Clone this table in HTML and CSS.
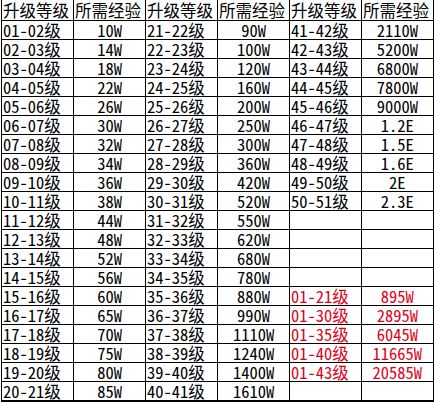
FILE: index.html
```html
<!DOCTYPE html>
<html lang="zh-CN">
<head>
<meta charset="utf-8">
<title>升级经验表</title>
<link rel="stylesheet" href="styles.css">
</head>
<body>
<table class="exp-table">
  <colgroup>
    <col class="c"><col class="c"><col class="c"><col class="c"><col class="c"><col class="c">
  </colgroup>
  <thead>
    <tr>
      <th class="lv">升级等级</th><th class="lv">所需经验</th>
      <th class="lv">升级等级</th><th class="lv">所需经验</th>
      <th class="lv">升级等级</th><th class="lv">所需经验</th>
    </tr>
  </thead>
  <tbody>
    <tr><td class="lv">01-02级</td><td class="xp">10W</td><td class="lv">21-22级</td><td class="xp">90W</td><td class="lv">41-42级</td><td class="xp">2110W</td></tr>
    <tr><td class="lv">02-03级</td><td class="xp">14W</td><td class="lv">22-23级</td><td class="xp">100W</td><td class="lv">42-43级</td><td class="xp">5200W</td></tr>
    <tr><td class="lv">03-04级</td><td class="xp">18W</td><td class="lv">23-24级</td><td class="xp">120W</td><td class="lv">43-44级</td><td class="xp">6800W</td></tr>
    <tr><td class="lv">04-05级</td><td class="xp">22W</td><td class="lv">24-25级</td><td class="xp">160W</td><td class="lv">44-45级</td><td class="xp">7800W</td></tr>
    <tr><td class="lv">05-06级</td><td class="xp">26W</td><td class="lv">25-26级</td><td class="xp">200W</td><td class="lv">45-46级</td><td class="xp">9000W</td></tr>
    <tr><td class="lv">06-07级</td><td class="xp">30W</td><td class="lv">26-27级</td><td class="xp">250W</td><td class="lv">46-47级</td><td class="xp">1.2E</td></tr>
    <tr><td class="lv">07-08级</td><td class="xp">32W</td><td class="lv">27-28级</td><td class="xp">300W</td><td class="lv">47-48级</td><td class="xp">1.5E</td></tr>
    <tr><td class="lv">08-09级</td><td class="xp">34W</td><td class="lv">28-29级</td><td class="xp">360W</td><td class="lv">48-49级</td><td class="xp">1.6E</td></tr>
    <tr><td class="lv">09-10级</td><td class="xp">36W</td><td class="lv">29-30级</td><td class="xp">420W</td><td class="lv">49-50级</td><td class="xp">2E</td></tr>
    <tr><td class="lv">10-11级</td><td class="xp">38W</td><td class="lv">30-31级</td><td class="xp">520W</td><td class="lv">50-51级</td><td class="xp">2.3E</td></tr>
    <tr><td class="lv">11-12级</td><td class="xp">44W</td><td class="lv">31-32级</td><td class="xp">550W</td><td></td><td></td></tr>
    <tr><td class="lv">12-13级</td><td class="xp">48W</td><td class="lv">32-33级</td><td class="xp">620W</td><td></td><td></td></tr>
    <tr><td class="lv">13-14级</td><td class="xp">52W</td><td class="lv">33-34级</td><td class="xp">680W</td><td></td><td></td></tr>
    <tr><td class="lv">14-15级</td><td class="xp">56W</td><td class="lv">34-35级</td><td class="xp">780W</td><td></td><td></td></tr>
    <tr><td class="lv">15-16级</td><td class="xp">60W</td><td class="lv">35-36级</td><td class="xp">880W</td><td class="lv red">01-21级</td><td class="xp red">895W</td></tr>
    <tr><td class="lv">16-17级</td><td class="xp">65W</td><td class="lv">36-37级</td><td class="xp">990W</td><td class="lv red">01-30级</td><td class="xp red">2895W</td></tr>
    <tr><td class="lv">17-18级</td><td class="xp">70W</td><td class="lv">37-38级</td><td class="xp">1110W</td><td class="lv red">01-35级</td><td class="xp red">6045W</td></tr>
    <tr><td class="lv">18-19级</td><td class="xp">75W</td><td class="lv">38-39级</td><td class="xp">1240W</td><td class="lv red">01-40级</td><td class="xp red">11665W</td></tr>
    <tr><td class="lv">19-20级</td><td class="xp">80W</td><td class="lv">39-40级</td><td class="xp">1400W</td><td class="lv red">01-43级</td><td class="xp red">20585W</td></tr>
    <tr><td class="lv">20-21级</td><td class="xp">85W</td><td class="lv">40-41级</td><td class="xp">1610W</td><td></td><td></td></tr>
  </tbody>
</table>
</body>
</html>
```

FILE: styles.css
```css
html, body {
  margin: 0;
  padding: 0;
  background: #fff;
}

.exp-table {
  margin-left: 1px;
  border-collapse: collapse;
  table-layout: fixed;
  width: 432px;
  font-family: "Noto Sans Mono CJK SC", "Noto Sans CJK SC", sans-serif;
  font-size: 16.5px;
  color: #000;
  border-bottom: 2px solid #000;
  border-right: 2px solid #000;
}

.exp-table col.c {
  width: 72px;
}

.exp-table th,
.exp-table td {
  height: 18px;
  padding: 0;
  line-height: 18px;
  border: 1px solid #000;
  font-weight: normal;
  white-space: nowrap;
}

.exp-table thead th {
  border-top: none;
  height: 19px;
  line-height: 20px;
}

.exp-table .lv {
  text-align: left;
  padding-left: 1px;
}

.exp-table .xp {
  text-align: center;
}

.red {
  color: #e2001a;
}
```
